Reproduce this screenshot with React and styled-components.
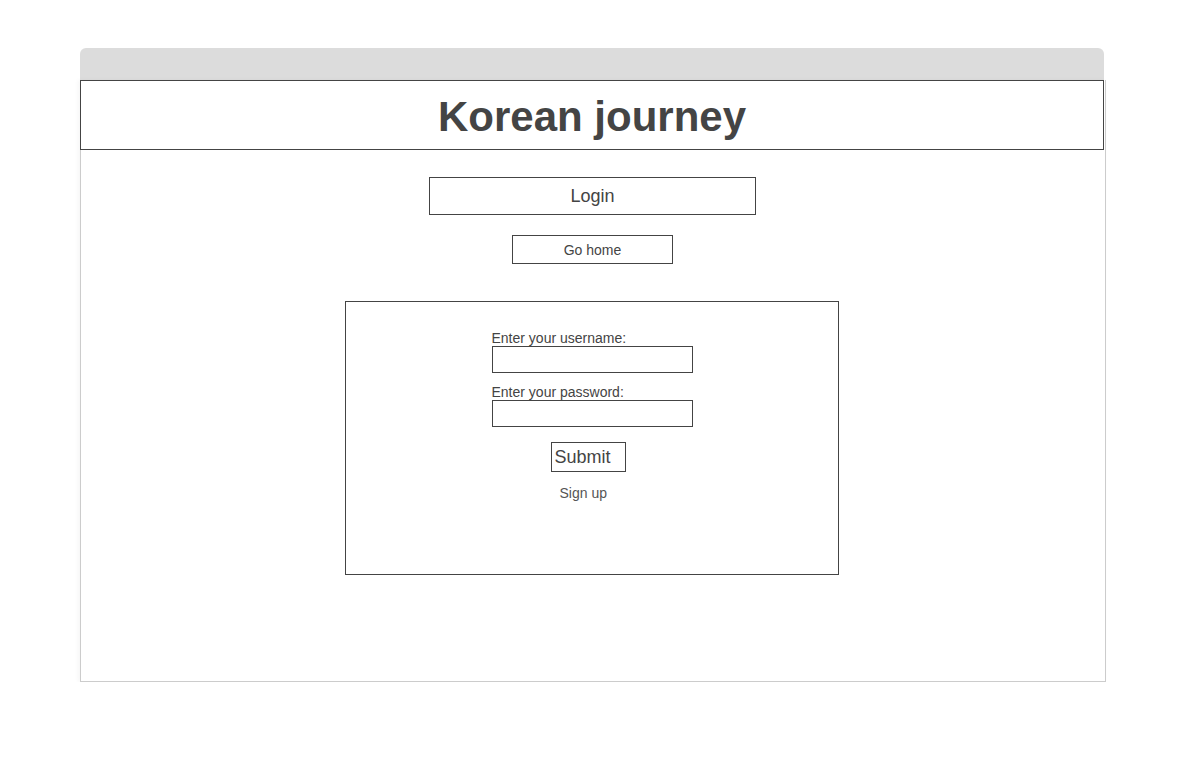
import React from "react";
import styled, { createGlobalStyle } from "styled-components";

const Global = createGlobalStyle`
  html, body {
    margin: 0;
    padding: 0;
    background: #fff;
    font-family: "Liberation Sans", Arial, sans-serif;
    color: #444;
  }
`;

const Page = styled.div`
  padding-top: 48px;
  display: flex;
  justify-content: center;
`;

const Window = styled.div`
  width: 1024px;
`;

const TopBar = styled.div`
  height: 32px;
  background: #dcdcdc;
  border-radius: 6px 6px 0 0;
`;

const Body = styled.div`
  box-sizing: border-box;
  width: 1026px;
  height: 602px;
  padding-right: 1px;
  border: 1px solid #ccc;
  border-top: none;
  box-shadow: -2px 0 4px rgba(0, 0, 0, 0.04);
  display: flex;
  flex-direction: column;
  align-items: center;
`;

const Header = styled.header`
  box-sizing: border-box;
  width: 1024px;
  height: 70px;
  margin-left: -1px;
  padding-top: 4px;
  border: 1px solid #444;
  display: flex;
  align-items: center;
  justify-content: center;
  flex-shrink: 0;
`;

const Title = styled.h1`
  margin: 0;
  font-size: 42px;
  font-weight: bold;
  color: #444;
`;

const BoxButton = styled.button`
  box-sizing: border-box;
  flex-shrink: 0;
  width: ${(p) => p.w}px;
  height: ${(p) => p.h}px;
  margin-top: ${(p) => p.top}px;
  border: 1px solid #444;
  background: #fff;
  color: #444;
  font-family: "Liberation Sans", Arial, sans-serif;
  font-size: ${(p) => p.size}px;
  padding: 0;
  cursor: pointer;
`;

const FormBox = styled.form`
  box-sizing: border-box;
  flex-shrink: 0;
  width: 494px;
  height: 274px;
  margin: 37px 1px 0 0;
  border: 1px solid #444;
  padding-top: 28px;
  display: flex;
  justify-content: center;
`;

const Column = styled.div`
  width: 201px;
  display: flex;
  flex-direction: column;
`;

const Label = styled.label`
  font-size: 14px;
  line-height: 16px;
  color: #444;
  margin-top: ${(p) => p.top || 0}px;
`;

const Input = styled.input`
  box-sizing: border-box;
  width: 201px;
  height: 27px;
  border: 1px solid #444;
  margin: 0;
`;

const Submit = styled.button`
  box-sizing: border-box;
  align-self: flex-start;
  margin: 15px 0 0 59px;
  width: 75px;
  height: 30px;
  padding: 0 3px;
  text-align: left;
  border: 1px solid #444;
  background: #fff;
  color: #444;
  font-family: "Liberation Sans", Arial, sans-serif;
  font-size: 18px;
`;

const SignUp = styled.a`
  align-self: flex-start;
  margin: 13px 0 0 68px;
  font-size: 14px;
  line-height: 16px;
  color: #555;
  text-decoration: none;
  cursor: pointer;
`;

export default function App() {
  return (
    <>
      <Global />
      <Page>
        <Window>
          <TopBar />
          <Body>
            <Header>
              <Title>Korean journey</Title>
            </Header>
            <BoxButton w={327} h={38} top={27} size={18}>
              Login
            </BoxButton>
            <BoxButton w={161} h={29} top={20} size={14}>
              Go home
            </BoxButton>
            <FormBox onSubmit={(e) => e.preventDefault()}>
              <Column>
                <Label htmlFor="username">Enter your username:</Label>
                <Input id="username" type="text" />
                <Label htmlFor="password" top={11}>
                  Enter your password:
                </Label>
                <Input id="password" type="password" />
                <Submit type="submit">Submit</Submit>
                <SignUp>Sign up</SignUp>
              </Column>
            </FormBox>
          </Body>
        </Window>
      </Page>
    </>
  );
}
